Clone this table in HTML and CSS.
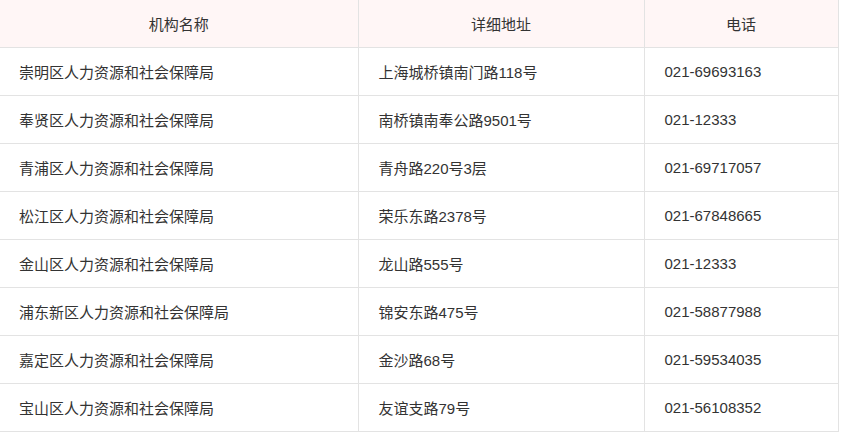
FILE: index.html
```html
<!DOCTYPE html>
<html lang="zh-CN">
<head>
<meta charset="utf-8">
<title>机构列表</title>
<link rel="stylesheet" href="styles.css">
</head>
<body>
<table class="org-table">
  <colgroup>
    <col class="c-name">
    <col class="c-addr">
    <col class="c-tel">
  </colgroup>
  <thead>
    <tr><th>机构名称</th><th>详细地址</th><th>电话</th></tr>
  </thead>
  <tbody>
    <tr><td>崇明区人力资源和社会保障局</td><td>上海城桥镇南门路118号</td><td>021-69693163</td></tr>
    <tr><td>奉贤区人力资源和社会保障局</td><td>南桥镇南奉公路9501号</td><td>021-12333</td></tr>
    <tr><td>青浦区人力资源和社会保障局</td><td>青舟路220号3层</td><td>021-69717057</td></tr>
    <tr><td>松江区人力资源和社会保障局</td><td>荣乐东路2378号</td><td>021-67848665</td></tr>
    <tr><td>金山区人力资源和社会保障局</td><td>龙山路555号</td><td>021-12333</td></tr>
    <tr><td>浦东新区人力资源和社会保障局</td><td>锦安东路475号</td><td>021-58877988</td></tr>
    <tr><td>嘉定区人力资源和社会保障局</td><td>金沙路68号</td><td>021-59534035</td></tr>
    <tr><td>宝山区人力资源和社会保障局</td><td>友谊支路79号</td><td>021-56108352</td></tr>
  </tbody>
</table>
</body>
</html>
```
FILE: styles.css
```css
html, body {
  margin: 0;
  padding: 0;
  background: #fff;
}
body {
  font-family: "Liberation Sans", "Noto Sans CJK SC", sans-serif;
  font-size: 15px;
  color: #333;
}
.org-table {
  border-collapse: collapse;
  table-layout: fixed;
  width: 838px;
}
.c-name { width: 358px; }
.c-addr { width: 286px; }
.c-tel { width: 194px; }
.org-table th,
.org-table td {
  height: 48px;
  padding: 0 0 0 20px;
  border-right: 1px solid #e3e3e3;
  border-bottom: 1px solid #e3e3e3;
  text-align: left;
  vertical-align: middle;
  white-space: nowrap;
  box-sizing: border-box;
}
.org-table td:first-child {
  padding-left: 19px;
}
.org-table th {
  height: 47px;
  background: #fff6f6;
  font-weight: normal;
  text-align: center;
  padding: 0;
}
```
